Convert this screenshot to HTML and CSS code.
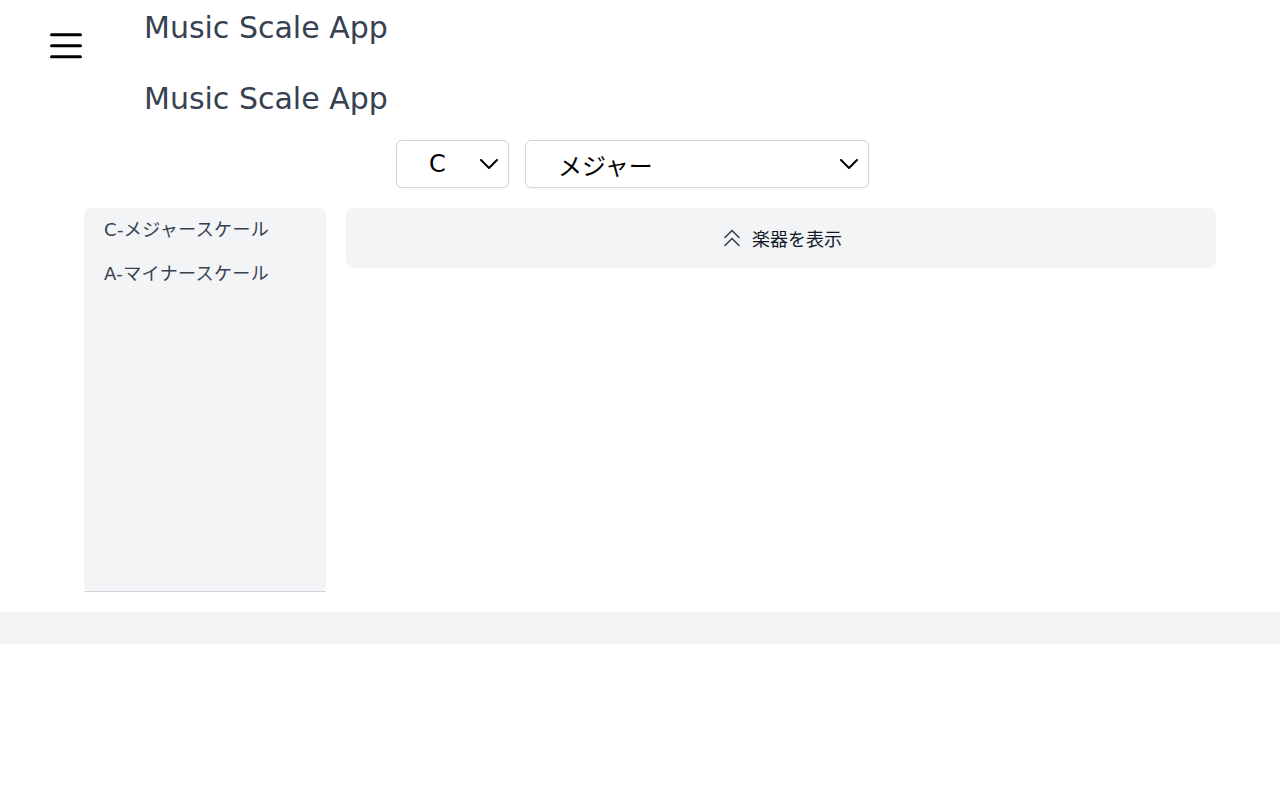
FILE: index.html
```html
<!DOCTYPE html>
<html lang="ja">
<head>
<meta charset="utf-8">
<title>Music Scale App</title>
<link rel="stylesheet" href="styles.css">
</head>
<body>
<header class="header">
  <button class="menu-btn" aria-label="menu">
    <svg width="32" height="26" viewBox="0 0 32 26" fill="none" stroke="#000" stroke-width="3" stroke-linecap="round">
      <line x1="1.5" y1="1.75" x2="30.5" y2="1.75"/>
      <line x1="1.5" y1="12.75" x2="30.5" y2="12.75"/>
      <line x1="1.5" y1="23.75" x2="30.5" y2="23.75"/>
    </svg>
  </button>
  <h1 class="title">Music Scale App</h1>
</header>
<main>
  <h1 class="title title-main">Music Scale App</h1>
  <div class="selects">
    <div class="select select-key">
      <span>C</span>
      <svg width="18" height="10" viewBox="0 0 18 10" fill="none" stroke="#000" stroke-width="2" stroke-linecap="round" stroke-linejoin="round"><polyline points="1,1 9,9 17,1"/></svg>
    </div>
    <div class="select select-scale">
      <span>メジャー</span>
      <svg width="18" height="10" viewBox="0 0 18 10" fill="none" stroke="#000" stroke-width="2" stroke-linecap="round" stroke-linejoin="round"><polyline points="1,1 9,9 17,1"/></svg>
    </div>
  </div>
  <div class="content">
    <aside class="sidebar">
      <div class="sidebar-panel">
        <div class="scale-item">C-メジャースケール</div>
        <div class="scale-item">A-マイナースケール</div>
      </div>
    </aside>
    <section class="main-area">
      <button class="toggle-btn">
        <svg width="24" height="24" viewBox="0 0 24 24" fill="none" stroke="#374151" stroke-width="1.6" stroke-linecap="round" stroke-linejoin="round"><path d="M5 11.5l7-7 7 7M5 19.5l7-7 7 7"/></svg>
        <span>楽器を表示</span>
      </button>
    </section>
  </div>
</main>
<footer class="footer"></footer>
</body>
</html>
```
FILE: styles.css
```css
* { box-sizing: border-box; }
html, body { margin: 0; padding: 0; }
body {
  font-family: "DejaVu Sans", "Noto Sans CJK JP", sans-serif;
  background: #fff;
  color: #000;
}
.header {
  display: flex;
  align-items: flex-start;
  padding: 10px 0 0 50px;
}
.menu-btn {
  border: 0;
  background: none;
  padding: 0;
  margin-top: 23px;
  width: 32px;
  height: 26px;
  display: block;
}
.menu-btn svg { display: block; }
.title {
  margin: 0;
  font-size: 30px;
  line-height: 36px;
  font-weight: 400;
  color: #374151;
}
.header .title { margin-left: 62px; }
.title-main {
  margin: 22px 0 0 144px;
}
.selects {
  width: 1265px;
  display: flex;
  justify-content: center;
  gap: 16px;
  margin-top: 23px;
}
.select {
  height: 48px;
  border: 1px solid #d1d5db;
  border-radius: 6px;
  box-shadow: 0 1px 2px rgba(0,0,0,0.05);
  display: flex;
  align-items: center;
  justify-content: space-between;
  padding: 0 10px 0 32px;
  font-size: 24px;
  color: #000;
  background: #fff;
}
.select svg { display: block; }
.select-key { width: 113px; }
.select-scale { width: 344px; }
.content {
  display: flex;
  gap: 20px;
  margin: 20px 64px 0 84px;
}
.sidebar {
  width: 242px;
  height: 384px;
  flex: none;
  border-bottom: 1px solid #d1d5db;
}
.sidebar-panel {
  height: 100%;
  background: #f3f4f6;
  border-radius: 6px;
}
.scale-item {
  padding: 8px 20px;
  font-size: 18px;
  line-height: 28px;
  color: #374151;
  letter-spacing: 0.4px;
}
.main-area { flex: 1; }
.toggle-btn {
  width: 100%;
  height: 60px;
  border: 0;
  border-radius: 8px;
  background: #f3f4f6;
  display: flex;
  align-items: center;
  justify-content: center;
  gap: 8px;
  font-family: inherit;
  font-size: 18px;
  color: #111827;
  padding: 0;
}
.toggle-btn svg { display: block; }
.footer {
  margin-top: 20px;
  height: 32px;
  background: #f3f4f6;
}
```
